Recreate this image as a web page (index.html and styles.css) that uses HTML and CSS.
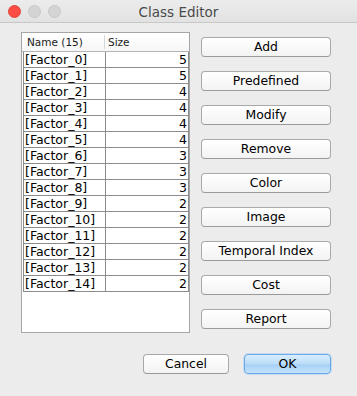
FILE: index.html
```html
<!DOCTYPE html>
<html>
<head>
<meta charset="utf-8">
<link rel="stylesheet" href="styles.css">
</head>
<body>
<div class="window">
  <div class="titlebar">
    <div class="lights">
      <span class="light red"></span>
      <span class="light gray"></span>
      <span class="light gray"></span>
    </div>
    <div class="title">Class Editor</div>
    <div></div>
  </div>
  <div class="body">
    <div class="main">
      <div class="listbox">
        <div class="thead">
          <div class="th th-name">Name (15)</div>
          <div class="th th-size">Size</div>
        </div>
        <div class="rows">
          <div class="row"><div class="cell">[Factor_0]</div><div class="cell num">5</div></div>
          <div class="row"><div class="cell">[Factor_1]</div><div class="cell num">5</div></div>
          <div class="row"><div class="cell">[Factor_2]</div><div class="cell num">4</div></div>
          <div class="row"><div class="cell">[Factor_3]</div><div class="cell num">4</div></div>
          <div class="row"><div class="cell">[Factor_4]</div><div class="cell num">4</div></div>
          <div class="row"><div class="cell">[Factor_5]</div><div class="cell num">4</div></div>
          <div class="row"><div class="cell">[Factor_6]</div><div class="cell num">3</div></div>
          <div class="row"><div class="cell">[Factor_7]</div><div class="cell num">3</div></div>
          <div class="row"><div class="cell">[Factor_8]</div><div class="cell num">3</div></div>
          <div class="row"><div class="cell">[Factor_9]</div><div class="cell num">2</div></div>
          <div class="row"><div class="cell">[Factor_10]</div><div class="cell num">2</div></div>
          <div class="row"><div class="cell">[Factor_11]</div><div class="cell num">2</div></div>
          <div class="row"><div class="cell">[Factor_12]</div><div class="cell num">2</div></div>
          <div class="row"><div class="cell">[Factor_13]</div><div class="cell num">2</div></div>
          <div class="row"><div class="cell">[Factor_14]</div><div class="cell num">2</div></div>
        </div>
      </div>
      <div class="buttons">
        <button class="btn">Add</button>
        <button class="btn">Predefined</button>
        <button class="btn">Modify</button>
        <button class="btn">Remove</button>
        <button class="btn">Color</button>
        <button class="btn">Image</button>
        <button class="btn">Temporal Index</button>
        <button class="btn">Cost</button>
        <button class="btn">Report</button>
      </div>
    </div>
    <div class="footer">
      <button class="btn btn-cancel">Cancel</button>
      <button class="btn btn-ok">OK</button>
    </div>
  </div>
</div>
</body>
</html>
```
FILE: styles.css
```css
html, body {
  margin: 0;
  padding: 0;
  background: #ececec;
}
body {
  font-family: "DejaVu Sans", "Liberation Sans", sans-serif;
  width: 357px;
  height: 396px;
  overflow: hidden;
}
.window {
  width: 357px;
  height: 396px;
  background: #ececec;
}
.titlebar {
  height: 22px;
  border-bottom: 1px solid #c8c8c8;
  background: linear-gradient(#ececec, #e2e2e2);
  display: grid;
  grid-template-columns: 1fr auto 1fr;
  align-items: center;
}
.lights {
  display: flex;
  gap: 7px;
  padding-left: 8px;
  padding-top: 1px;
}
.light {
  width: 13px;
  height: 13px;
  border-radius: 50%;
  box-sizing: border-box;
}
.light.red {
  background: #fc4d44;
  border: 1px solid #e2443c;
}
.light.gray {
  background: #d4d4d4;
  border: 1px solid #c8c8c8;
}
.title {
  font-size: 13.5px;
  color: #4a4a4a;
  padding-top: 1px;
}
.body {
  display: flex;
  flex-direction: column;
}
.main {
  display: flex;
  align-items: flex-start;
  padding-left: 21px;
  padding-top: 9px;
}
.listbox {
  width: 169px;
  height: 301px;
  box-sizing: border-box;
  border: 1px solid #a6a6a6;
  background: #ffffff;
}
.thead {
  display: grid;
  grid-template-columns: 83px 1fr;
  height: 19px;
  box-sizing: border-box;
  border-bottom: 1px solid #b4b4b4;
  background: linear-gradient(#ffffff, #f6f6f6);
  font-size: 10.5px;
  color: #1a1a1a;
  line-height: 18px;
}
.th-name {
  padding-left: 5px;
  border-right: 1px solid #d6d6d6;
  margin: 2px 0;
  line-height: 14px;
}
.th-size {
  padding-left: 3px;
  margin: 2px 0;
  line-height: 14px;
}
.rows {
  margin-left: 1px;
}
.row {
  display: grid;
  grid-template-columns: 82px 83px;
  border-left: 1px solid #8c8c8c;
  width: 166px;
}
.cell {
  height: 16px;
  box-sizing: border-box;
  border-right: 1px solid #8c8c8c;
  border-bottom: 1px solid #8c8c8c;
  font-size: 12.5px;
  line-height: 15px;
  padding-left: 1px;
  color: #000;
  white-space: nowrap;
}
.cell.num {
  text-align: right;
  padding-right: 1px;
}
.buttons {
  display: flex;
  flex-direction: column;
  gap: 14px;
  margin-left: 11px;
  margin-top: 5px;
}
.btn {
  width: 130px;
  height: 20px;
  box-sizing: border-box;
  padding: 0;
  margin: 0;
  border: 1px solid #a9a9a9;
  border-bottom-color: #9a9a9a;
  border-radius: 4px;
  background: linear-gradient(#ffffff, #f3f3f3);
  font-family: "DejaVu Sans", "Liberation Sans", sans-serif;
  font-size: 12.4px;
  color: #000;
  line-height: 18px;
  text-align: center;
}
.footer {
  display: flex;
  justify-content: flex-end;
  gap: 15px;
  padding-right: 26px;
  margin-top: 21px;
}
.btn-cancel {
  width: 86px;
}
.btn-ok {
  width: 87px;
  border: 1px solid #6aaae6;
  background: linear-gradient(#d9eefd, #b9dcf8 50%, #a6d1f5 55%, #c6e4fb);
  box-shadow: 0 0 0 1px rgba(130, 190, 245, 0.35);
}
```
